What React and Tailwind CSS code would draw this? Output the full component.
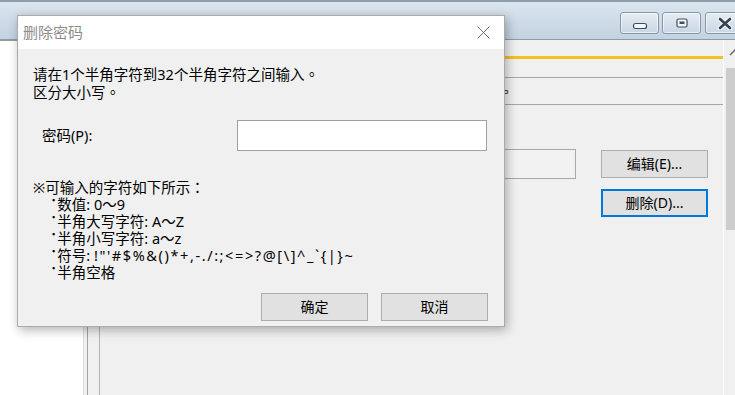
import React from "react";

const WinButton = ({ children, className = "" }) => (
  <div
    className={`h-[22px] w-[39px] shrink-0 rounded-[3px] border border-[#8797ab] bg-linear-to-b from-[#e6edf4] to-[#c9d6e4] shadow-[inset_0_0_0_1px_rgba(255,255,255,0.55)] flex items-center justify-center ${className}`}
  >
    {children}
  </div>
);

const DlgButton = ({ children }) => (
  <button className="h-[28px] w-[107px] border border-[#adadad] bg-[#e1e1e1] text-[14px] leading-none text-black">
    {children}
  </button>
);

const Dot = () => <span className="leading-[0] align-[4px]">･</span>;

const App = () => {
  return (
    <div className="relative w-[735px] h-[395px] overflow-hidden bg-[#f0f0f0] font-['Noto_Sans','Noto_Sans_CJK_SC',sans-serif] text-[14px] text-black">
      {/* main window title bar */}
      <div className="h-[40px] border-t-2 border-t-[#8f9cab] border-b border-b-[#8c9aab] bg-linear-to-b from-[#dbe5ee] to-[#c3d2e1] flex justify-end items-start pt-[10px]">
        <WinButton>
          <svg width="16" height="14" viewBox="0 0 16 14">
            <rect x="1.5" y="7.5" width="13" height="5" rx="2" fill="#f4f7fa" stroke="#3e4c5c" strokeWidth="1.2" />
          </svg>
        </WinButton>
        <WinButton className="ml-[3px]">
          <svg width="12" height="10" viewBox="0 0 12 10">
            <rect x="1" y="1" width="10" height="8" rx="1.5" fill="#f4f7fa" stroke="#3e4c5c" strokeWidth="1.2" />
            <rect x="3.5" y="3.5" width="5" height="2.5" fill="#3e4c5c" />
          </svg>
        </WinButton>
        <WinButton className="ml-[4px] -mr-[9px]">
          <svg width="16" height="13" viewBox="0 0 16 13">
            <path d="M3 2 L13 11 M13 2 L3 11" stroke="#f4f7fa" strokeWidth="5" strokeLinecap="round" />
            <path d="M3 2 L13 11 M13 2 L3 11" stroke="#35414f" strokeWidth="2.6" strokeLinecap="round" />
          </svg>
        </WinButton>
      </div>

      <div className="flex h-[355px]">
        <div className="w-[83px] shrink-0 bg-white border-t border-t-[#9a9a9a]"></div>
        <div className="w-[4px] shrink-0 border-l border-[#dcdcdc]"></div>
        <div className="w-[12px] shrink-0 border-l border-[#a3a3a3]"></div>

        <div className="w-[624px] shrink-0 border-l border-[#b5b5b5] flex flex-col pt-[16px]">
          <div className="h-[3px] bg-[#f3c21a]"></div>
          <div className="h-[18px]"></div>
          <div className="h-[28px] border-t border-b border-[#a6a6a6] flex items-center">
            <div className="w-[413px] text-right leading-none">
              请选择要编辑或删除的密码，然后单击相应的按钮
              <span className="font-['Noto_Sans_CJK_TC',sans-serif]">。</span>
            </div>
          </div>
          <div className="mt-[44px] flex justify-end items-start pr-[15px]">
            <div className="h-[30px] w-[300px] border border-[#a8a8a8] bg-[#f2f2f2]"></div>
            <div className="ml-[25px] mt-[1px] flex flex-col gap-[11px]">
              <button className="h-[28px] w-[107px] border border-[#adadad] bg-[#e1e1e1] text-[14px] leading-none">
                编辑(E)...
              </button>
              <button className="h-[28px] w-[107px] border-2 border-[#0078d7] bg-[#e1e1e1] text-[14px] leading-none">
                删除(D)...
              </button>
            </div>
          </div>
        </div>

        <div className="w-[12px] shrink-0 border-l border-white flex flex-col">
          <div className="h-[28px] pt-[8px] pl-[3px]">
            <svg width="14" height="10" viewBox="0 0 14 10">
              <path d="M3 7 L8 2 L13 7" fill="none" stroke="#606060" strokeWidth="1.4" />
            </svg>
          </div>
          <div className="ml-[2px] h-[162px] bg-[#cdcdcd]"></div>
        </div>
      </div>

      {/* 删除密码 dialog */}
      <div className="absolute left-[17px] top-[15px] w-[488px] h-[312px] border border-[#ababab] bg-[#f0f0f0] shadow-[2px_3px_10px_rgba(0,0,0,0.3)] flex flex-col">
        <div className="h-[33px] shrink-0 bg-white flex items-center justify-between pl-[5px] pr-[14px]">
          <span className="text-[15px] text-[#8c8c8c]">删除密码</span>
          <svg width="13" height="13" viewBox="0 0 13 13">
            <path d="M0.5 0.5 L12.5 12.5 M12.5 0.5 L0.5 12.5" stroke="#6e6e6e" strokeWidth="1" />
          </svg>
        </div>

        <div className="flex flex-col pl-[15px] pr-[16px] pt-[16px] text-[14.5px] leading-[17px]">
          <p>
            请在1个半角字符到32个半角字符之间输入
            <span className="font-['Noto_Sans_CJK_TC',sans-serif]">。</span>
          </p>
          <p>
            区分大小写
            <span className="font-['Noto_Sans_CJK_TC',sans-serif]">。</span>
          </p>

          <div className="mt-[19px] flex items-center">
            <label className="w-[204px] pl-[9px]">密码(P):</label>
            <div className="h-[31px] w-[250px] border border-[#a0a0a0] bg-white"></div>
          </div>

          <p className="mt-[27px]">
            ※可输入的字符如下所示
            <span className="font-['Noto_Sans_CJK_TC',sans-serif]">：</span>
          </p>
          <div className="pl-[17px] flex flex-col">
            <p><Dot />数值: 0～9</p>
            <p><Dot />半角大写字符: A～Z</p>
            <p><Dot />半角小写字符: a～z</p>
            <p>
              <Dot />符号: <span className="tracking-[1.6px]">{'!"\'#$%&()*+,-./:;<=>?@[\\]^_`{|}~'}</span>
            </p>
            <p><Dot />半角空格</p>
          </div>

          <div className="mt-[12px] flex justify-end gap-[13px]">
            <DlgButton>确定</DlgButton>
            <DlgButton>取消</DlgButton>
          </div>
        </div>
      </div>
    </div>
  );
};

export default App;
